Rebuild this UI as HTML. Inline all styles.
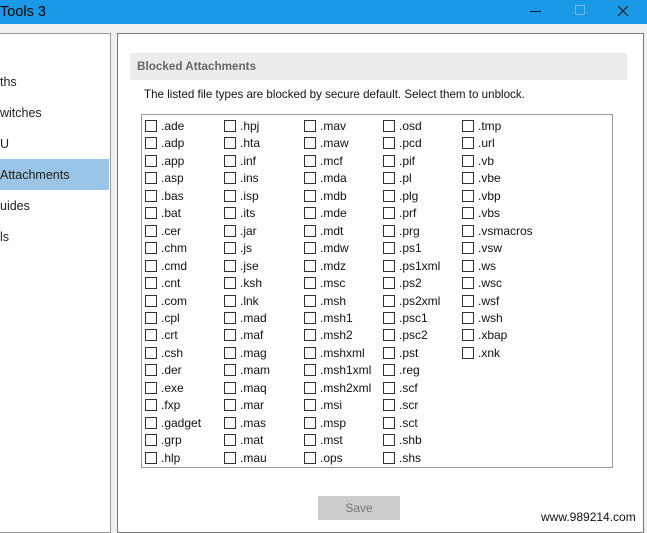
<!DOCTYPE html>
<html><head><style>
*{margin:0;padding:0;box-sizing:border-box}
body{width:647px;height:526px;overflow:hidden;background:#f0f0f0;font-family:"Liberation Sans",sans-serif;font-size:12px;color:#000;position:relative}
.abs{position:absolute}
#tb{left:0;top:0;width:647px;height:24px;background:#1a9ae6}
#left{left:0;top:33px;width:111px;height:500px;background:#fff;border:1px solid #999;border-left:none}
#right{left:117px;top:33px;width:527px;height:500px;background:#fff;border:1px solid #777}
.li{position:absolute;left:0;font-size:12.5px;color:#222}
.cb{position:absolute;width:12px;height:12px;border:1px solid #333;background:#fff}
.t{position:absolute;font-size:12px;color:#111}
</style></head><body>
<div id="tb" class="abs"></div>
<div class="abs" style="left:0;top:4px;font-size:14.5px;color:#000">Tools 3</div>
<div class="abs" style="left:530px;top:11px;width:11px;height:1px;background:#222"></div>
<div class="abs" style="left:575px;top:5px;width:10px;height:10px;border:1px solid #6bb8ea"></div>
<svg class="abs" style="left:617px;top:5px" width="12" height="12"><path d="M1 1L11 11M11 1L1 11" stroke="#222" stroke-width="1.2"/></svg>
<div id="left" class="abs"></div>
<div class="abs" style="left:0;top:159px;width:109px;height:31px;background:#9ac5e6"></div>
<div class="li" style="top:75px">ths</div>
<div class="li" style="top:106px">witches</div>
<div class="li" style="top:137px">U</div>
<div class="li" style="top:168px">Attachments</div>
<div class="li" style="top:199px">uides</div>
<div class="li" style="top:230px">ls</div>
<div id="right" class="abs"></div>
<div class="abs" style="left:130px;top:53px;width:497px;height:27px;background:#ececec"></div>
<div class="abs" style="left:137px;top:60px;font-size:11.7px;font-weight:bold;color:#666">Blocked Attachments</div>
<div class="abs" style="left:144px;top:88px;font-size:11.6px;color:#111">The listed file types are blocked by secure default. Select them to unblock.</div>
<div class="abs" style="left:141px;top:114px;width:472px;height:354px;background:#fff;border:1px solid #999"></div>
<div id="items"></div>
<div class="abs" style="left:318px;top:496px;width:82px;height:24px;background:#ccc;color:#777;font-size:12px;text-align:center;line-height:24px">Save</div>
<div class="abs" style="left:541px;top:510px;font-size:12px;color:#111">www.989214.com</div>
<script>
var cols=[
[".ade",".adp",".app",".asp",".bas",".bat",".cer",".chm",".cmd",".cnt",".com",".cpl",".crt",".csh",".der",".exe",".fxp",".gadget",".grp",".hlp"],
[".hpj",".hta",".inf",".ins",".isp",".its",".jar",".js",".jse",".ksh",".lnk",".mad",".maf",".mag",".mam",".maq",".mar",".mas",".mat",".mau"],
[".mav",".maw",".mcf",".mda",".mdb",".mde",".mdt",".mdw",".mdz",".msc",".msh",".msh1",".msh2",".mshxml",".msh1xml",".msh2xml",".msi",".msp",".mst",".ops"],
[".osd",".pcd",".pif",".pl",".plg",".prf",".prg",".ps1",".ps1xml",".ps2",".ps2xml",".psc1",".psc2",".pst",".reg",".scf",".scr",".sct",".shb",".shs"],
[".tmp",".url",".vb",".vbe",".vbp",".vbs",".vsmacros",".vsw",".ws",".wsc",".wsf",".wsh",".xbap",".xnk"]];
var cx=[145,224,304,383,462],h="";
cols.forEach(function(c,i){c.forEach(function(n,j){var y=119+j*17.45;
h+='<div class="cb" style="left:'+cx[i]+'px;top:'+(y+1)+'px"></div><div class="t" style="left:'+(cx[i]+16)+'px;top:'+y+'px">'+n+'</div>';});});
document.getElementById("items").innerHTML=h;
</script>
</body></html>
